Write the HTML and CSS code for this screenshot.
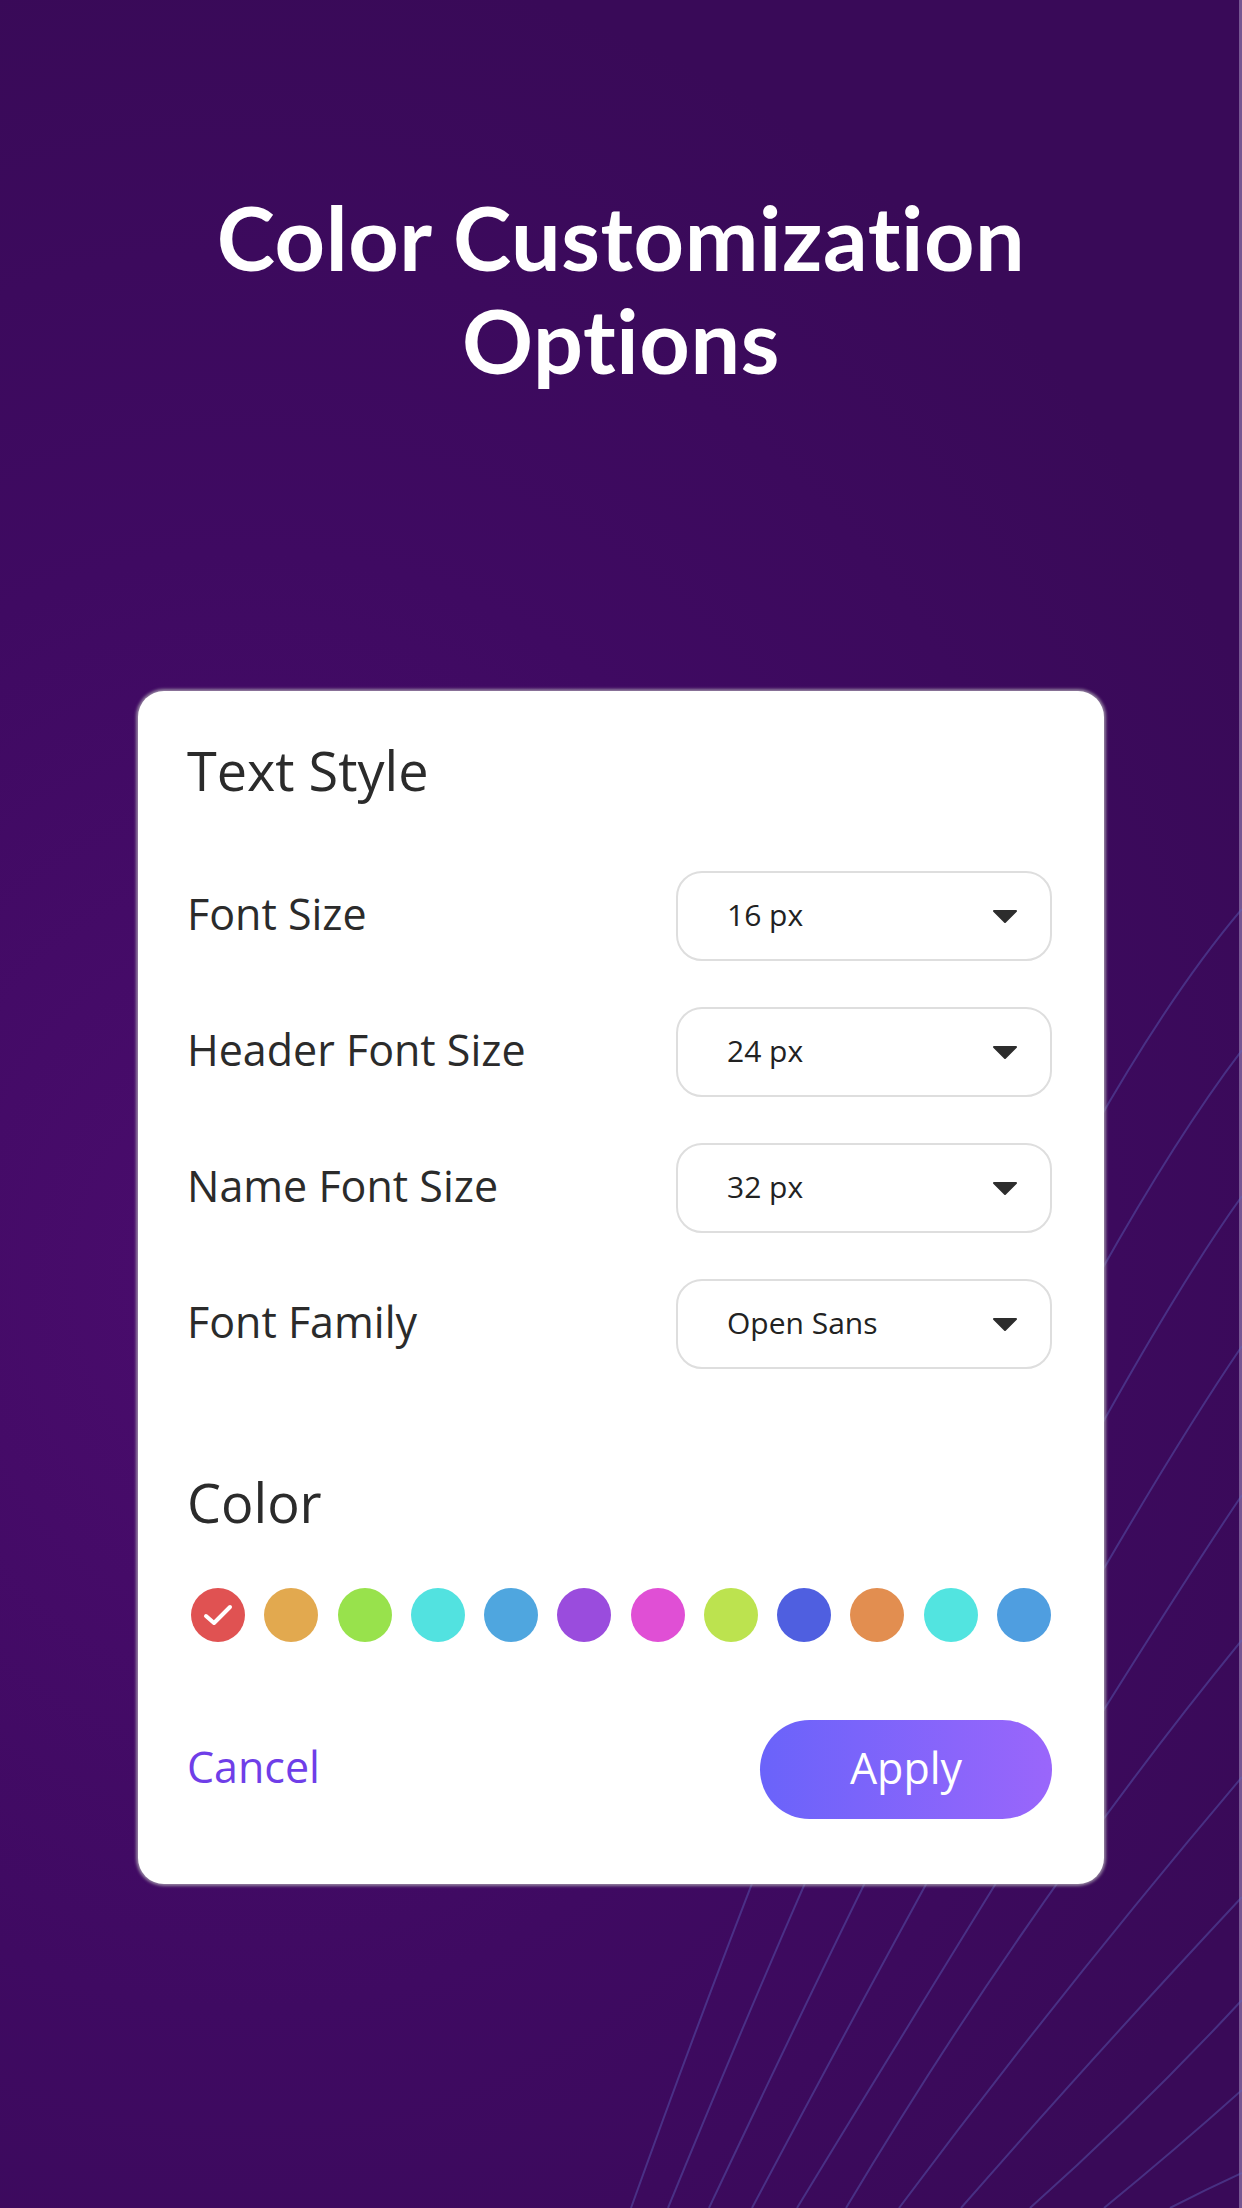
FILE: index.html
```html
<!DOCTYPE html>
<html lang="en">
<head>
    <meta charset="UTF-8">
    <meta name="viewport" content="width=device-width, initial-scale=1.0">
    <title>Color Customization Options</title>
    <link rel="stylesheet" href="styles.css">
</head>
<body>
    <div class="screen">
        <!-- decorative lines in the lower right -->
        <svg class="waves" viewBox="0 0 1242 2208" width="1242" height="2208">
            <path d="M631 2208 Q993 1202 1242 909"/>
            <path d="M668 2208 Q1026 1334 1242 1050"/>
            <path d="M709 2208 Q1077 1426 1242 1196"/>
            <path d="M752 2208 Q1091 1568 1242 1346"/>
            <path d="M797 2208 Q1132 1658 1242 1495"/>
            <path d="M846 2208 Q1030 1900 1242 1640"/>
            <path d="M899 2208 Q1058 1995 1242 1777"/>
            <path d="M961 2208 Q1090 2060 1242 1897"/>
            <path d="M1030 2208 Q1140 2110 1242 2000"/>
            <path d="M1104 2208 Q1175 2150 1242 2090"/>
            <path d="M1170 2208 Q1205 2190 1242 2173"/>
        </svg>

        <h1 class="title">Color Customization<br>Options</h1>

        <div class="card">
            <h2 class="section-title">Text Style</h2>

            <div class="rows">
                <div class="row">
                    <span class="label">Font Size</span>
                    <div class="select">
                        <span>16 px</span>
                        <svg class="caret" viewBox="0 0 26 15" width="26" height="15"><path d="M2 2 H24 L13 13 Z"/></svg>
                    </div>
                </div>
                <div class="row">
                    <span class="label">Header Font Size</span>
                    <div class="select">
                        <span>24 px</span>
                        <svg class="caret" viewBox="0 0 26 15" width="26" height="15"><path d="M2 2 H24 L13 13 Z"/></svg>
                    </div>
                </div>
                <div class="row">
                    <span class="label">Name Font Size</span>
                    <div class="select">
                        <span>32 px</span>
                        <svg class="caret" viewBox="0 0 26 15" width="26" height="15"><path d="M2 2 H24 L13 13 Z"/></svg>
                    </div>
                </div>
                <div class="row">
                    <span class="label">Font Family</span>
                    <div class="select">
                        <span>Open Sans</span>
                        <svg class="caret" viewBox="0 0 26 15" width="26" height="15"><path d="M2 2 H24 L13 13 Z"/></svg>
                    </div>
                </div>
            </div>

            <h2 class="section-title color-title">Color</h2>

            <div class="swatches">
                <span class="swatch red selected">
                    <svg viewBox="0 0 54 54" width="54" height="54"><polyline points="15,28 23,35 39,19"/></svg>
                </span>
                <span class="swatch gold"></span>
                <span class="swatch green"></span>
                <span class="swatch cyan"></span>
                <span class="swatch sky"></span>
                <span class="swatch purple"></span>
                <span class="swatch magenta"></span>
                <span class="swatch lime"></span>
                <span class="swatch indigo"></span>
                <span class="swatch orange"></span>
                <span class="swatch aqua"></span>
                <span class="swatch blue"></span>
            </div>

            <div class="actions">
                <a href="#" class="cancel">Cancel</a>
                <button class="apply">Apply</button>
            </div>
        </div>
    </div>
</body>
</html>
```

FILE: styles.css
```css
body {
    margin: 0;
    font-family: "Open Sans", "Noto Sans", sans-serif;
}
.screen {
    position: relative;
    width: 1242px;
    height: 2208px;
    overflow: hidden;
    display: flex;
    flex-direction: column;
    align-items: center;
    padding-top: 186px;
    box-sizing: border-box;
    background: radial-gradient(ellipse 90% 60% at 20% 58%, #4a0c6d 0%, #3f0a62 55%, #390a58 100%);
    box-shadow: inset -3px 0 0 rgba(190, 180, 215, 0.45); /* thin light edge on the right */
}
.waves {
    position: absolute;
    top: 0;
    left: 0;
    fill: none;
    stroke: rgba(96, 104, 196, 0.4);
    stroke-width: 2;
}
.title {
    position: relative;
    margin: 0;
    font-family: Lato, "Open Sans", sans-serif;
    font-weight: 700;
    font-size: 88px;
    line-height: 103px;
    letter-spacing: 0.6px;
    font-variant-ligatures: none;
    color: #ffffff;
    text-align: center;
}
.card {
    position: relative;
    z-index: 1;
    margin-top: 299px;
    width: 966px;
    box-sizing: border-box;
    padding: 47px 52px 65px 49px;
    background-color: #ffffff;
    border-radius: 26px;
    box-shadow: 0 0 3px 2px rgba(175, 170, 180, 0.75);
}
.section-title {
    margin: 0;
    font-weight: 400;
    font-size: 54px;
    line-height: 65px;
    color: #2b2b2b;
}
.rows {
    margin-top: 68px;
    display: flex;
    flex-direction: column;
    gap: 46px;
}
.row {
    display: flex;
    justify-content: space-between;
    align-items: center;
}
.label {
    font-size: 43px;
    line-height: 56px;
    margin-bottom: 4px;
    color: #2b2b2b;
}
.select {
    width: 376px;
    height: 90px;
    box-sizing: border-box;
    border: 2px solid #dedede;
    border-radius: 26px;
    padding: 0 32px 0 49px;
    display: flex;
    justify-content: space-between;
    align-items: center;
    font-size: 30px;
    color: #222222;
}
.select span {
    margin-bottom: 4px;
}
.caret path {
    fill: #2d2d2d;
    stroke: #2d2d2d;
    stroke-width: 2;
    stroke-linejoin: round;
}
.color-title {
    margin-top: 101px;
}
.swatches {
    margin-top: 53px;
    display: flex;
    justify-content: space-between;
    padding: 0 1px 0 4px;
}
.swatch {
    width: 54px;
    height: 54px;
    border-radius: 50%;
    display: flex;
}
.swatch polyline {
    fill: none;
    stroke: #ffffff;
    stroke-width: 4;
    stroke-linecap: round;
    stroke-linejoin: round;
}
.red { background-color: #e05252; }
.gold { background-color: #e2a94f; }
.green { background-color: #98e24c; }
.cyan { background-color: #52e2e0; }
.sky { background-color: #4fa6df; }
.purple { background-color: #9a4cdd; }
.magenta { background-color: #e04fd5; }
.lime { background-color: #bce34f; }
.indigo { background-color: #4f5fe0; }
.orange { background-color: #e28e50; }
.aqua { background-color: #52e4e0; }
.blue { background-color: #4f9ee0; }
.actions {
    margin-top: 78px;
    display: flex;
    justify-content: space-between;
    align-items: center;
}
.cancel {
    font-size: 43px;
    color: #6f3ee8;
    text-decoration: none;
    margin-bottom: 6px;
}
.apply {
    width: 292px;
    height: 99px;
    border: none;
    border-radius: 50px;
    background: linear-gradient(90deg, #6a63fa, #9a66fb);
    color: #ffffff;
    font-family: "Open Sans", "Noto Sans", sans-serif;
    font-size: 43px;
    padding-bottom: 6px;
    cursor: pointer;
}
```
